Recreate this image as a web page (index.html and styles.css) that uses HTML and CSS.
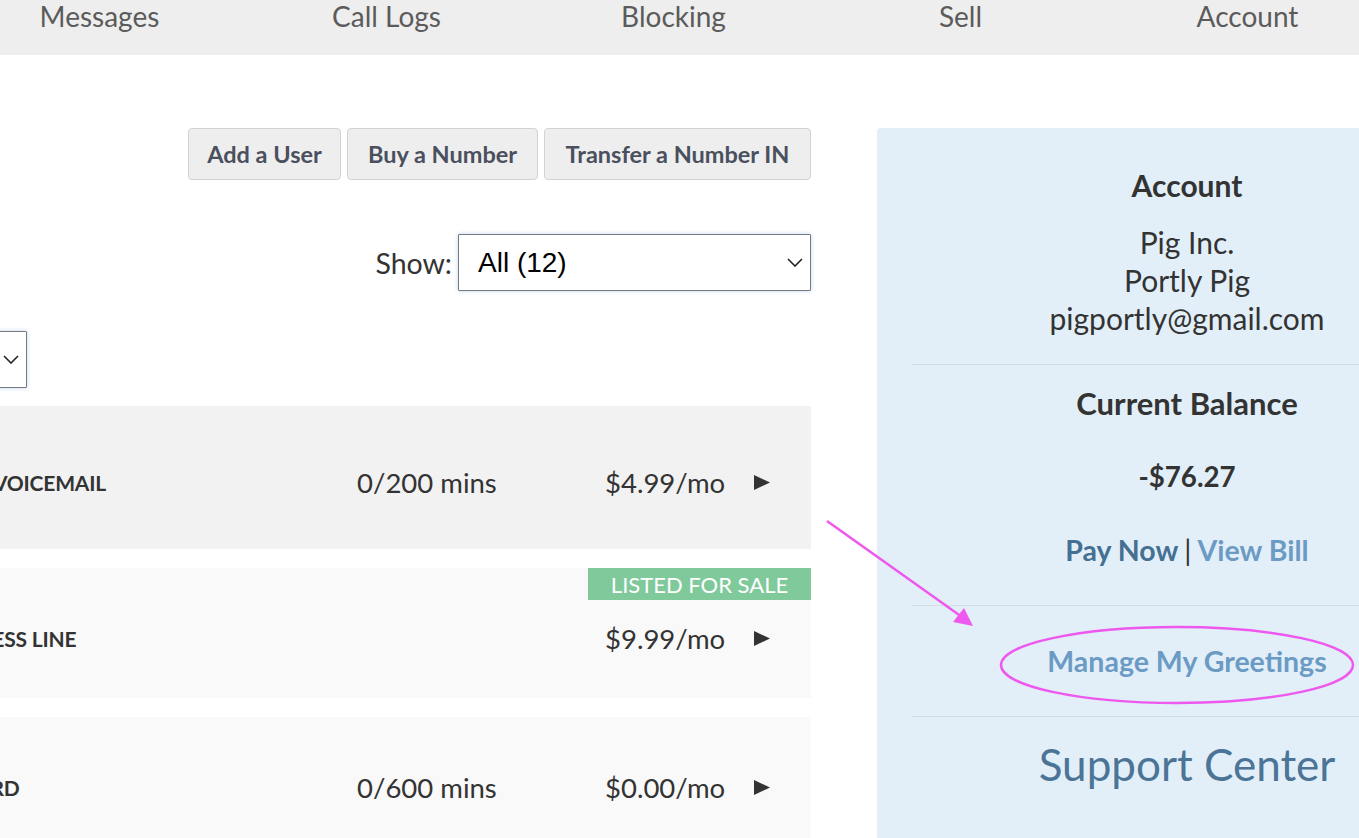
FILE: index.html
```html
<!DOCTYPE html>
<html lang="en">
<head>
<meta charset="utf-8">
<title>Account – Numbers</title>
<link rel="stylesheet" href="styles.css">
</head>
<body>
<nav class="topnav">
  <a class="topnav-item" href="#">Messages</a>
  <a class="topnav-item" href="#">Call Logs</a>
  <a class="topnav-item" href="#">Blocking</a>
  <a class="topnav-item" href="#">Sell</a>
  <a class="topnav-item" href="#">Account</a>
</nav>

<main class="layout">
  <section class="numbers">
    <div class="toolbar">
      <button class="btn" type="button">Add a User</button>
      <button class="btn" type="button">Buy a Number</button>
      <button class="btn" type="button">Transfer a Number IN</button>
    </div>

    <div class="filter">
      <label class="filter-label" for="show">Show:</label>
      <div class="select-wrap select-wide">
        <select id="show" class="select">
          <option>All (12)</option>
        </select>
        <svg class="chevron" viewBox="0 0 16 9" aria-hidden="true"><path d="M1 1l7 7 7-7"/></svg>
      </div>
    </div>

    <div class="sort">
      <div class="select-wrap select-narrow">
        <select class="select">
          <option>Sort</option>
        </select>
        <svg class="chevron" viewBox="0 0 16 9" aria-hidden="true"><path d="M1 1l7 7 7-7"/></svg>
      </div>
    </div>

    <ul class="lines">
      <li class="line line-dark">
        <span class="line-name">BASIC VOICEMAIL</span>
        <span class="line-usage">0/200 mins</span>
        <span class="line-price">$4.99/mo</span>
        <svg class="line-go" viewBox="0 0 17 17" aria-hidden="true"><path d="M1 1l16 7.5L1 16z"/></svg>
      </li>
      <li class="line line-light line-short">
        <span class="badge">LISTED FOR SALE</span>
        <span class="line-name">BUSINESS LINE</span>
        <span class="line-usage"></span>
        <span class="line-price">$9.99/mo</span>
        <svg class="line-go" viewBox="0 0 17 17" aria-hidden="true"><path d="M1 1l16 7.5L1 16z"/></svg>
      </li>
      <li class="line line-light line-short">
        <span class="line-name">REWARD</span>
        <span class="line-usage">0/600 mins</span>
        <span class="line-price">$0.00/mo</span>
        <svg class="line-go" viewBox="0 0 17 17" aria-hidden="true"><path d="M1 1l16 7.5L1 16z"/></svg>
      </li>
    </ul>
  </section>

  <aside class="panel">
    <div class="panel-block block-account">
      <h2 class="panel-title">Account</h2>
      <p class="panel-text">Pig Inc.<br>Portly Pig<br>pigportly@gmail.com</p>
    </div>
    <div class="panel-block block-balance">
      <h2 class="panel-title title-wide">Current Balance</h2>
      <p class="balance">-$76.27</p>
      <p class="bill-links"><a class="link-dark" href="#">Pay Now</a><span class="pipe">|</span><a class="link-light" href="#">View Bill</a></p>
    </div>
    <div class="panel-block block-greetings">
      <a class="link-light greetings" href="#">Manage My Greetings</a>
    </div>
    <div class="panel-block block-support">
      <a class="support" href="#">Support Center</a>
    </div>
  </aside>
</main>

<svg class="markup" width="1359" height="838" viewBox="0 0 1359 838" aria-hidden="true">
  <line x1="827" y1="521" x2="962" y2="617" />
  <polygon points="973,626 953,622 964,608" />
  <ellipse cx="1177" cy="665" rx="176" ry="38" />
</svg>
</body>
</html>
```

FILE: styles.css
```css
* {
  box-sizing: border-box;
}

html,
body {
  margin: 0;
  padding: 0;
}

body {
  width: 1359px;
  height: 838px;
  overflow: hidden;
  position: relative;
  background: #ffffff;
  color: #333333;
  font-family: "Lato", "Noto Sans", sans-serif;
}

a {
  text-decoration: none;
}

/* ---------- top navigation ---------- */
.topnav {
  display: grid;
  grid-template-columns: repeat(5, 287px);
  height: 55px;
  margin-left: -44px;
  background: #eeeeee;
}

.topnav-item {
  display: block;
  text-align: center;
  font-size: 28px;
  line-height: 33px;
  color: #5b5b5b;
}

/* ---------- page columns ---------- */
.layout {
  display: flex;
  align-items: flex-start;
  gap: 66px;
  margin-left: -130px;
  padding-top: 73px;
}

.numbers {
  width: 941px;
  flex: none;
}

/* ---------- action buttons ---------- */
.toolbar {
  display: flex;
  justify-content: flex-end;
  gap: 6px;
}

.btn {
  height: 52px;
  padding: 0;
  border: 1px solid #d2d2d2;
  border-radius: 4px;
  background: #eeeeee;
  color: #4a505d;
  font-family: inherit;
  font-size: 23.5px;
  font-weight: 700;
}

.btn:nth-child(1) { width: 153px; }
.btn:nth-child(2) { width: 191px; }
.btn:nth-child(3) { width: 267px; }

/* ---------- filters ---------- */
.filter {
  display: flex;
  justify-content: flex-end;
  align-items: center;
  gap: 6px;
  margin-top: 54px;
}

.filter-label {
  font-size: 28.5px;
  color: #333333;
}

.sort {
  margin-top: 40px;
}

.select-wrap {
  position: relative;
  height: 57px;
}

.select-wide {
  width: 353px;
}

.select-narrow {
  width: 157px;
}

.select {
  appearance: none;
  -webkit-appearance: none;
  width: 100%;
  height: 100%;
  padding: 0 40px 0 19px;
  border: 1px solid #747982;
  border-radius: 1px;
  background: #ffffff;
  box-shadow: 0 0 4px rgba(110, 160, 215, 0.45);
  color: #000000;
  font-family: "Liberation Sans", Arial, sans-serif;
  font-size: 28px;
}

.chevron {
  position: absolute;
  right: 8px;
  top: 24px;
  width: 16px;
  height: 9px;
  fill: none;
  stroke: #222222;
  stroke-width: 1.6;
  pointer-events: none;
}

/* ---------- phone lines ---------- */
.lines {
  list-style: none;
  margin: 18px 0 0;
  padding: 0;
  display: flex;
  flex-direction: column;
  gap: 19px;
}

.line {
  position: relative;
  display: flex;
  align-items: center;
  height: 143px;
  padding: 10px 41px 0 60px;
  font-size: 27.5px;
  color: #333333;
}

.line-short {
  height: 130px;
}

.line-dark {
  background: #f2f2f2;
}

.line-light {
  background: #f9f9f9;
}

.line-name {
  flex: 1;
  font-size: 21px;
  font-weight: 700;
  letter-spacing: -0.2px;
}

.line-usage {
  width: 248px;
}

.line-price {
  width: 148px;
}

.line-go {
  width: 17px;
  height: 17px;
  fill: #333333;
}

.badge {
  position: absolute;
  top: 0;
  right: 0;
  width: 223px;
  height: 32px;
  background: #80c99b;
  color: #ffffff;
  font-size: 22px;
  line-height: 33px;
  text-align: center;
}

/* ---------- account panel ---------- */
.panel {
  flex: none;
  width: 620px;
  height: 720px;
  padding: 0 35px;
  border-radius: 4px 0 0 0;
  background: #e2eff8;
  text-align: center;
}

.panel-block + .panel-block {
  border-top: 1px solid #d4dce2;
}

.panel-title {
  margin: 0;
  font-size: 30px;
  line-height: 38px;
  font-weight: 700;
  color: #333333;
}

.title-wide {
  font-size: 31px;
}

.panel-text {
  margin: 19px 0 0;
  font-size: 30px;
  line-height: 38px;
  color: #333333;
}

.block-account {
  height: 236px;
  padding-top: 38px;
}

.block-balance {
  height: 241px;
  padding-top: 19px;
}

.balance {
  margin: 36px 0 0;
  font-size: 27.7px;
  line-height: 38px;
  font-weight: 700;
  color: #333333;
}

.bill-links {
  margin: 35px 0 0;
  font-size: 28.5px;
  line-height: 38px;
  font-weight: 700;
}

.pipe {
  margin: 0 6px;
  font-weight: 400;
  color: #333333;
}

.link-dark {
  color: #456f93;
}

.link-light {
  color: #6b9bc4;
}

.block-greetings {
  height: 111px;
  padding-top: 36px;
}

.greetings {
  display: inline-block;
  font-size: 28.5px;
  line-height: 38px;
  font-weight: 700;
}

.block-support {
  padding-top: 18px;
}

.support {
  font-size: 44px;
  line-height: 58px;
  color: #4b7497;
}

/* ---------- hand-drawn callout ---------- */
.markup {
  position: absolute;
  left: 0;
  top: 0;
  pointer-events: none;
}

.markup line,
.markup ellipse {
  fill: none;
  stroke: #ee58ef;
  stroke-width: 2.5;
}

.markup polygon {
  fill: #ee58ef;
}
```
